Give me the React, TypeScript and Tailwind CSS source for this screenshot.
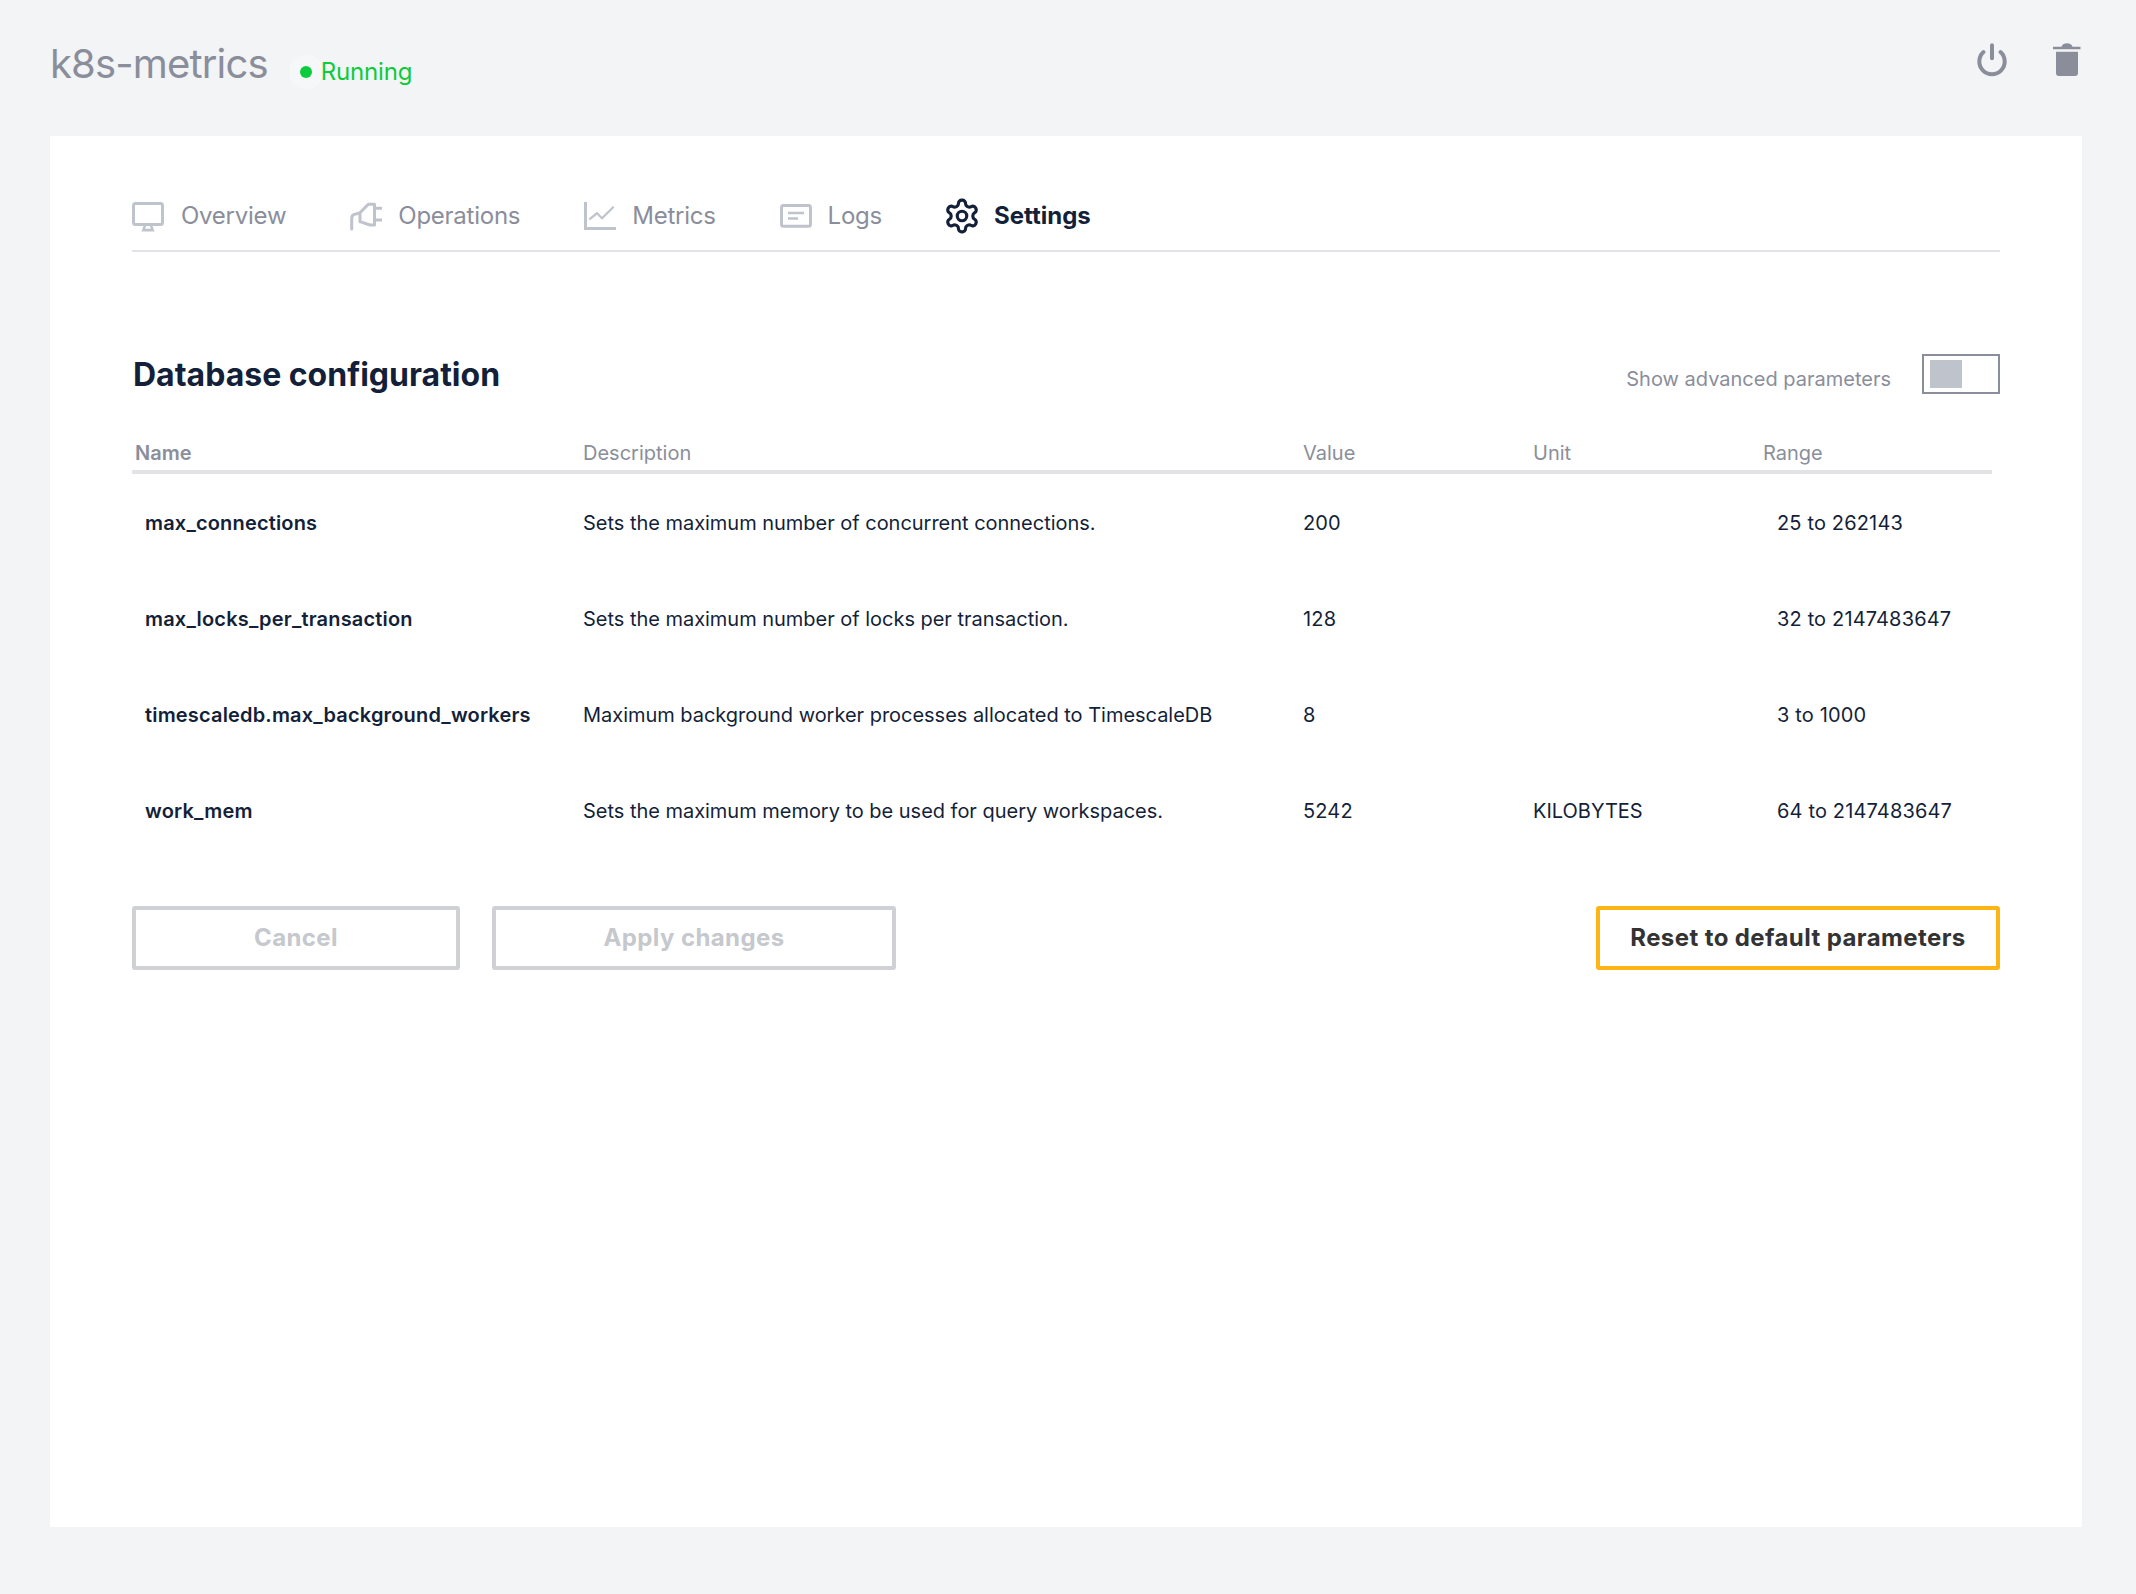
import React from 'react';

const rows = [
  { name: 'max_connections', description: 'Sets the maximum number of concurrent connections.', value: '200', unit: '', range: '25 to 262143' },
  { name: 'max_locks_per_transaction', description: 'Sets the maximum number of locks per transaction.', value: '128', unit: '', range: '32 to 2147483647' },
  { name: 'timescaledb.max_background_workers', description: 'Maximum background worker processes allocated to TimescaleDB', value: '8', unit: '', range: '3 to 1000' },
  { name: 'work_mem', description: 'Sets the maximum memory to be used for query workspaces.', value: '5242', unit: 'KILOBYTES', range: '64 to 2147483647' },
];

const OverviewIcon = () => (
  <svg width="32" height="32" viewBox="0 0 32 32" fill="none">
    <rect x="1.5" y="3.5" width="29" height="21" rx="2" stroke="#bfc3cc" strokeWidth="3" />
    <path d="M11.5 26h9l2 5.5h-13z" fill="#bfc3cc" />
    <path d="M14 26h4l.8 2.8h-5.6z" fill="#fff" />
  </svg>
);

const OperationsIcon = () => (
  <svg width="32" height="32" viewBox="0 0 32 32" fill="none" stroke="#bfc3cc" strokeWidth="3" strokeLinecap="round" strokeLinejoin="round">
    <path d="M1.7 29V18.5q0-4 4-4.5l3-.7" />
    <path d="M10 12.7L18.3 4.2H24.5V25H20L10 21.7z" />
    <path d="M25 8.3h6M25 20h6" />
  </svg>
);

const MetricsIcon = () => (
  <svg width="32" height="32" viewBox="0 0 32 32" fill="none" stroke="#bfc3cc">
    <path d="M1.5 2v26.5H32" strokeWidth="3" />
    <path d="M5.3 19.3L13 13.3l5 5L29.7 6.7" strokeWidth="2.2" />
  </svg>
);

const LogsIcon = () => (
  <svg width="32" height="32" viewBox="0 0 32 32" fill="none" stroke="#bfc3cc">
    <rect x="1.5" y="5.5" width="29" height="20.7" rx="2" strokeWidth="3" />
    <path d="M8 13h16M8 18.5h10" strokeWidth="2.6" />
  </svg>
);

const SettingsIcon = () => (
  <svg className="-m-[3px]" width="38" height="38" viewBox="0 0 24 24" fill="none" stroke="#141f39" strokeWidth="2" strokeLinecap="round" strokeLinejoin="round">
    <path d="M12.22 2h-.44a2 2 0 0 0-2 2v.18a2 2 0 0 1-1 1.73l-.43.25a2 2 0 0 1-2 0l-.15-.08a2 2 0 0 0-2.73.73l-.22.38a2 2 0 0 0 .73 2.73l.15.1a2 2 0 0 1 1 1.72v.51a2 2 0 0 1-1 1.74l-.15.09a2 2 0 0 0-.73 2.73l.22.38a2 2 0 0 0 2.73.73l.15-.08a2 2 0 0 1 2 0l.43.25a2 2 0 0 1 1 1.73V20a2 2 0 0 0 2 2h.44a2 2 0 0 0 2-2v-.18a2 2 0 0 1 1-1.73l.43-.25a2 2 0 0 1 2 0l.15.08a2 2 0 0 0 2.73-.73l.22-.39a2 2 0 0 0-.73-2.73l-.15-.08a2 2 0 0 1-1-1.74v-.5a2 2 0 0 1 1-1.74l.15-.09a2 2 0 0 0 .73-2.73l-.22-.38a2 2 0 0 0-2.73-.73l-.15.08a2 2 0 0 1-2 0l-.43-.25a2 2 0 0 1-1-1.73V4a2 2 0 0 0-2-2z" />
    <circle cx="12" cy="12" r="3" />
  </svg>
);

const tabs = [
  { label: 'Overview', icon: OverviewIcon },
  { label: 'Operations', icon: OperationsIcon },
  { label: 'Metrics', icon: MetricsIcon },
  { label: 'Logs', icon: LogsIcon },
];

export default function App() {
  return (
    <div className="h-[1594px] w-[2136px] bg-[#f3f4f6] px-[50px] font-['Inter',sans-serif]">
      <header className="flex h-[136px] items-start justify-between pt-[42px]">
        <div className="flex items-center">
          <h1 className="text-[40px] leading-[44px] tracking-[-0.85px] text-[#8a8e9b]">k8s-metrics</h1>
          <div className="ml-[32px] mt-[16px] flex items-center gap-[9px] text-[24px] leading-none tracking-[-0.15px] text-[#0ccb3d]">
            <span className="h-[12px] w-[12px] rounded-full bg-[#0ccb3d] shadow-[0_0_0_11px_rgba(255,255,255,0.25)]" />
            Running
          </div>
        </div>
        <div className="mr-[5px] mt-[1px] flex items-center gap-[45px]">
          <svg width="32" height="34" viewBox="0 0 32 34" fill="none" stroke="#8a8e9b" strokeWidth="4" strokeLinecap="round">
            <path d="M16 2.3v13" />
            <path d="M7.5 9.1a12.7 12.7 0 1 0 17 0" />
          </svg>
          <svg width="28" height="34" viewBox="0 0 28 34" fill="#8a8e9b">
            <path d="M0 3.8h8.500C9.500 1.200 11.500.3 14 .3s4.500.9 5.500 3.500H27.500v2.500H0z" />
            <path d="M3 8.700h22V30a3 3 0 0 1-3 3H6a3 3 0 0 1-3-3z" />
          </svg>
        </div>
      </header>

      <main className="h-[1391px] w-[2032px] bg-white px-[82px] pt-[64px]">
        <nav className="flex h-[52px] items-start gap-[64px] border-b-2 border-[#e1e3e7]">
          {tabs.map(({ label, icon: Icon }) => (
            <div key={label} className="flex items-center gap-[16px] text-[24px] leading-[32px] tracking-[-0.25px] text-[#8a8e9b] first:gap-[17px]">
              <Icon />
              {label}
            </div>
          ))}
          <div className="flex items-center gap-[16px] text-[24px] font-bold leading-[32px] text-[#141f39]">
            <SettingsIcon />
            Settings
          </div>
        </nav>

        <div className="mt-[100px] flex h-[44px] items-center justify-between">
          <h2 className="mt-[2px] pl-[1px] text-[32px] font-bold leading-none text-[#141f39]">Database configuration</h2>
          <div className="flex items-center gap-[31px]">
            <span className="mt-[9px] text-[20px] text-[#8a8e9b]">Show advanced parameters</span>
            <div className="flex h-[40px] w-[78px] items-center border-2 border-[#8a8e9b] pl-[6px]">
              <div className="h-[28px] w-[32px] bg-[#bfc3cc]" />
            </div>
          </div>
        </div>

        <table className="mt-[42px] w-[1860px] table-fixed border-separate border-spacing-0 text-[20px]">
          <colgroup>
            <col className="w-[451px]" />
            <col className="w-[720px]" />
            <col className="w-[230px]" />
            <col className="w-[230px]" />
            <col className="w-[229px]" />
          </colgroup>
          <thead>
            <tr className="h-[36px] text-left text-[#8a8e9b]">
              <th className="border-b-4 border-[#e1e3e7] pb-[2px] pl-[3px] font-semibold">Name</th>
              <th className="border-b-4 border-[#e1e3e7] pb-[2px] font-normal">Description</th>
              <th className="border-b-4 border-[#e1e3e7] pb-[2px] font-normal">Value</th>
              <th className="border-b-4 border-[#e1e3e7] pb-[2px] font-normal">Unit</th>
              <th className="border-b-4 border-[#e1e3e7] pb-[2px] font-normal">Range</th>
            </tr>
          </thead>
          <tbody className="text-[#141f39]">
            {rows.map((row) => (
              <tr key={row.name} className="h-[96px]">
                <td className="whitespace-nowrap pl-[13px] pt-[2px] font-semibold tracking-[0.17px]">{row.name}</td>
                <td className="whitespace-nowrap pt-[2px] tracking-[-0.025px]">{row.description}</td>
                <td className="pt-[2px] tracking-[0.15px]">{row.value}</td>
                <td className="pt-[2px]">{row.unit}</td>
                <td className="whitespace-nowrap pl-[14px] pt-[2px] tracking-[0.15px]">{row.range}</td>
              </tr>
            ))}
          </tbody>
        </table>

        <div className="mt-[48px] flex items-center">
          <button className="h-[64px] w-[328px] rounded-[3px] border-4 border-[#cfd1d5] bg-white text-[24px] font-bold tracking-[0.4px] text-[#c5c8cd]">Cancel</button>
          <button className="ml-[32px] h-[64px] w-[404px] rounded-[3px] border-4 border-[#cfd1d5] bg-white text-[24px] font-bold tracking-[0.4px] text-[#c5c8cd]">Apply changes</button>
          <button className="ml-auto h-[64px] w-[404px] rounded-[3px] border-4 border-[#fdb515] bg-white text-[24px] font-bold tracking-[0.4px] text-[#333333]">Reset to default parameters</button>
        </div>
      </main>
    </div>
  );
}
